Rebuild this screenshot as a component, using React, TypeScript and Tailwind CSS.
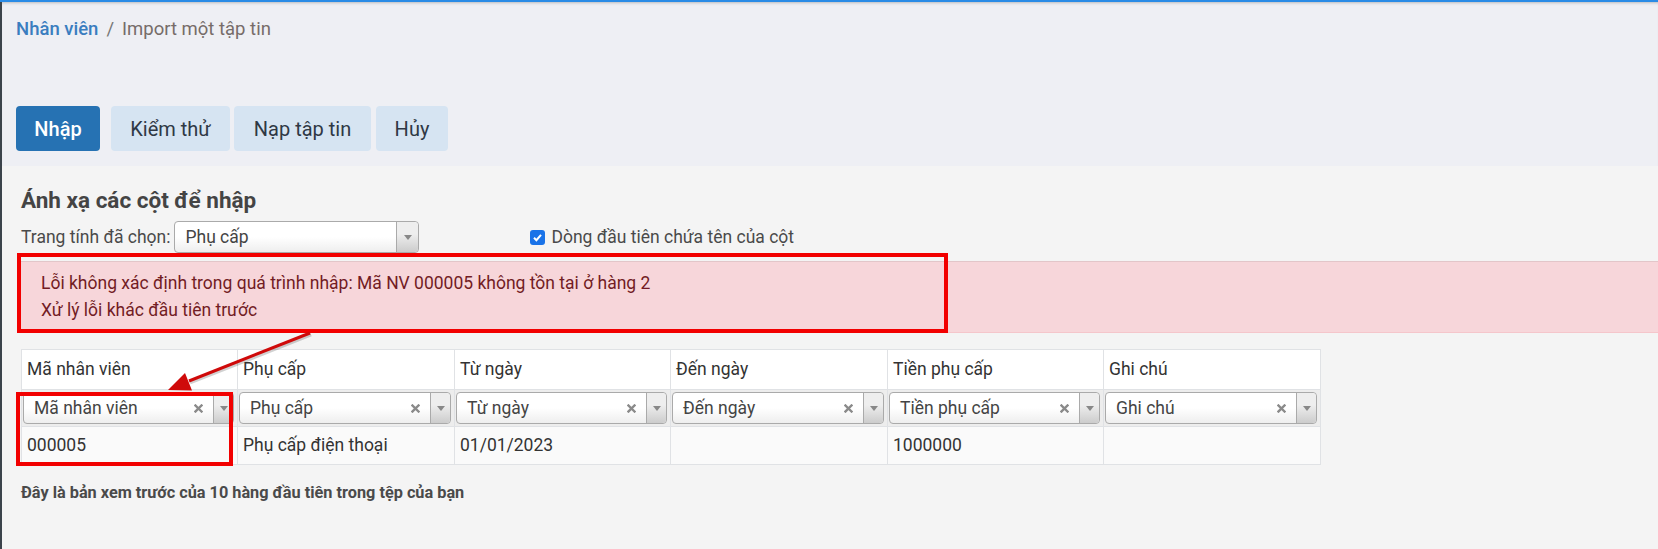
import React from "react";

function ClearX() {
  return (
    <svg width="9" height="9" viewBox="0 0 9 9" className="shrink-0">
      <path d="M1.5 1.5 L7.5 7.5 M7.5 1.5 L1.5 7.5" stroke="#8a8a8a" strokeWidth="2.4" strokeLinecap="square" />
    </svg>
  );
}

function Caret() {
  return (
    <svg width="8" height="5" viewBox="0 0 8 5">
      <path d="M0 0 L8 0 L4 5 Z" fill="#888" />
    </svg>
  );
}

function Select2({ label, clear = true, arrowW = "w-[20px]" }: { label: string; clear?: boolean; arrowW?: string }) {
  return (
    <div className="flex h-[32px] w-full items-center rounded-[4px] border border-[#aaaaaa] bg-[linear-gradient(to_top,#eeeeee_0%,#ffffff_50%)]">
      <span className="flex-1 truncate pl-[10px] text-[17.5px] leading-[30px] text-[#444]">{label}</span>
      {clear && (
        <span className="mr-[10px] flex items-center">
          <ClearX />
        </span>
      )}
      <div className={`flex h-full ${arrowW} shrink-0 items-center justify-center rounded-r-[4px] border-l border-[#aaaaaa] bg-[linear-gradient(to_top,#cccccc_0%,#eeeeee_60%)]`}>
        <Caret />
      </div>
    </div>
  );
}

const cols = ["Mã nhân viên", "Phụ cấp", "Từ ngày", "Đến ngày", "Tiền phụ cấp", "Ghi chú"];
const widths = ["w-[216px]", "w-[217px]", "w-[216px]", "w-[217px]", "w-[216px]", "w-[216px]"];
const data = ["000005", "Phụ cấp điện thoại", "01/01/2023", "", "1000000", ""];

export default function App() {
  return (
    <div className="relative h-[549px] w-[1658px] overflow-hidden bg-[#f4f4f4] font-['Roboto',sans-serif]">
      <div className="h-[2px] bg-[#2a8be6]" />
      <div className="flex h-[547px] border-l-2 border-[#3b434b]">
        <div className="flex flex-1 flex-col">
          <header className="flex h-[164px] flex-col bg-[#eeeff4] pl-[14px] pt-[15px] shadow-[inset_0_3px_3px_-2px_rgba(0,0,0,0.22)]">
            <div className="flex h-[24px] items-center text-[18.5px] leading-[24px]">
              <span className="font-medium text-[#3a7dbf]">Nhân viên</span>
              <span className="mx-[8px] text-[#777]">/</span>
              <span className="text-[#766c69]">Import một tập tin</span>
            </div>
            <div className="mt-[65px] flex items-center">
              <button className="h-[45px] w-[84px] rounded-[4px] bg-[#2672b3] text-[20px] font-medium text-white">Nhập</button>
              <button className="ml-[11px] h-[45px] w-[119px] rounded-[4px] bg-[#d6e4f2] text-[20px] text-[#2f3845]">Kiểm thử</button>
              <button className="ml-[4px] h-[45px] w-[137px] rounded-[4px] bg-[#d6e4f2] text-[20px] text-[#2f3845]">Nạp tập tin</button>
              <button className="ml-[5px] h-[45px] w-[72px] rounded-[4px] bg-[#d6e4f2] text-[20px] text-[#2f3845]">Hủy</button>
            </div>
          </header>
          <main className="flex flex-col pl-[19px] pt-[20px]">
            <h2 className="h-[28px] text-[22.5px] font-bold leading-[28px] text-[#444]">Ánh xạ các cột để nhập</h2>
            <div className="mt-[7px] flex h-[32px] items-center">
              <span className="text-[17.5px] text-[#4a4a4a]">Trang tính đã chọn:</span>
              <div className="ml-[4px] w-[245px]">
                <Select2 label="Phụ cấp" clear={false} arrowW="w-[22px]" />
              </div>
              <div className="ml-[111px] flex items-center">
                <span className="flex h-[15px] w-[15px] items-center justify-center rounded-[3px] bg-[#1a73e8]">
                  <svg width="11" height="11" viewBox="0 0 11 11">
                    <path d="M2 5.8 L4.4 8.2 L9 2.8" stroke="#fff" strokeWidth="2" fill="none" />
                  </svg>
                </span>
                <span className="ml-[6px] text-[17.5px] text-[#4a4a4a]">Dòng đầu tiên chứa tên của cột</span>
              </div>
            </div>
            <div className="mt-[8px] border-b border-t border-b-[#f5c6cb] border-t-[#e3c6c9] bg-[#f7d6da] px-[20px] py-[8px] text-[17.5px] leading-[27px] text-[#721c24]">
              <div>Lỗi không xác định trong quá trình nhập: Mã NV 000005 không tồn tại ở hàng 2</div>
              <div>Xử lý lỗi khác đầu tiên trước</div>
            </div>
            <div className="mt-[16px] w-[1300px] border border-[#e0e2e5] text-[17.5px] text-[#333]">
              <div className="flex h-[40px] border-b border-[#e0e2e5] bg-white">
                {cols.map((c, i) => (
                  <div key={c} className={`${widths[i]} flex items-center pl-[5px] ${i < 5 ? "border-r border-[#e0e2e5]" : ""}`}>
                    {c}
                  </div>
                ))}
              </div>
              <div className="flex h-[37px] border-b border-[#e0e2e5] bg-[#ededed]">
                {cols.map((c, i) => (
                  <div key={c} className={`${widths[i]} flex items-center pl-[1px] pr-[3px] ${i < 5 ? "border-r border-[#e0e2e5]" : ""}`}>
                    <Select2 label={c} />
                  </div>
                ))}
              </div>
              <div className="flex h-[37px] bg-[#fafafa]">
                {data.map((d, i) => (
                  <div key={i} className={`${widths[i]} flex items-center pl-[5px] ${i < 5 ? "border-r border-[#e0e2e5]" : ""}`}>
                    {d}
                  </div>
                ))}
              </div>
            </div>
            <p className="mt-[18px] text-[16.3px] font-bold leading-[20px] text-[#4a4a4a]">
              Đây là bản xem trước của 10 hàng đầu tiên trong tệp của bạn
            </p>
          </main>
        </div>
      </div>

      {/* annotation overlays */}
      <div className="pointer-events-none absolute left-[17px] top-[253px] h-[80px] w-[931px] border-[4px] border-[#f20000]" />
      <div className="pointer-events-none absolute left-[16px] top-[392px] h-[74px] w-[217px] border-[4px] border-[#f20000]" />
      <svg className="pointer-events-none absolute left-0 top-0" width="1658" height="549" viewBox="0 0 1658 549">
        <line x1="311" y1="334.5" x2="190" y2="382.5" stroke="#000" strokeOpacity="0.18" strokeWidth="4" />
        <line x1="310" y1="333" x2="189" y2="381" stroke="#cf0a0a" strokeWidth="3" />
        <polygon points="168,390 192,390.5 185,373" fill="#cf0a0a" />
      </svg>
    </div>
  );
}
